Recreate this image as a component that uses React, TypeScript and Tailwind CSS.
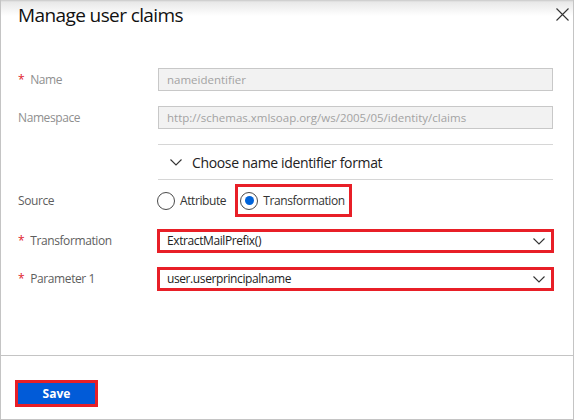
import React, { useState } from 'react';

const font = { fontFamily: '"Open Sans", "Noto Sans", Arial, sans-serif' };

const Chevron: React.FC<{ className?: string }> = ({ className }) => (
  <svg className={className} width="12" height="7" viewBox="0 0 12 7" fill="none">
    <path d="M0.5 0.5L6 6L11.5 0.5" stroke="#333" strokeWidth="1.1" />
  </svg>
);

const Label: React.FC<{ text: string; required?: boolean; dim?: boolean }> = ({ text, required, dim }) => (
  <div className={`w-[140px] shrink-0 text-[12px] tracking-[-0.4px] ${dim ? 'text-[#8f8f8f]' : 'text-[#5e5e5e]'}`}>
    {required ? <span className="mr-[6px] text-[#e0202a]">*</span> : null}
    {text}
  </div>
);

const ReadOnlyField: React.FC<{ value: string }> = ({ value }) => (
  <div className="flex h-[23px] w-[395px] items-center border border-[#c8c8c8] bg-[#f2f2f2] px-[8px] text-[11.5px] text-[#a3a3a3]">
    {value}
  </div>
);

const Radio: React.FC<{ checked?: boolean; label: string; onClick: () => void }> = ({ checked, label, onClick }) => (
  <button
    type="button"
    onClick={onClick}
    className="flex items-center gap-[5px] text-[12px] tracking-[-0.4px] text-[#333]"
  >
    <span className="flex h-[18px] w-[18px] items-center justify-center rounded-full border border-[#4a4a4a] bg-white">
      {checked ? <span className="h-[9px] w-[9px] rounded-full bg-[#0063d9]" /> : null}
    </span>
    {label}
  </button>
);

const Select: React.FC<{ value: string }> = ({ value }) => (
  <div className="-ml-px flex h-[24px] w-[397px] items-center justify-between border-[3px] border-[#e81f27] bg-white pl-[7px] pr-[6px] text-[12px] tracking-[-0.4px] text-[#222]">
    <span>{value}</span>
    <Chevron />
  </div>
);

export default function App() {
  const [source, setSource] = useState<'attribute' | 'transformation'>('transformation');

  return (
    <div className="h-[420px] w-[574px] bg-white" style={font}>
      <div className="flex h-full w-[574px] flex-col border-x border-b border-[#c4c4c4]">
        {/* blade header */}
        <div className="flex h-[40px] items-start justify-between bg-[linear-gradient(to_bottom,#c8c8c8_0px,#e8e8e8_2px,#ffffff_16px)] pl-[17px] pr-[3px]">
          <h1 className="mt-px text-[19px] leading-[28px] tracking-[-0.6px] text-[#111]">Manage user claims</h1>
          <button type="button" className="mt-[7px] p-[1px]" aria-label="Close">
            <svg width="13" height="13" viewBox="0 0 13 13">
              <path d="M0.5 0.5L12.5 12.5M12.5 0.5L0.5 12.5" stroke="#333" strokeWidth="1.1" />
            </svg>
          </button>
        </div>

        {/* form */}
        <div className="flex flex-1 flex-col pl-[17px] pt-[28px]">
          <div className="flex h-[23px] items-center">
            <Label text="Name" required dim />
            <ReadOnlyField value="nameidentifier" />
          </div>
          <div className="mt-[15px] flex h-[23px] items-center">
            <Label text="Namespace" dim />
            <ReadOnlyField value="http://schemas.xmlsoap.org/ws/2005/05/identity/claims" />
          </div>

          <div className="ml-[140px] mt-[15px] flex h-[36px] w-[395px] items-center border-y border-[#d6d6d6] pl-[12px] text-[14px] tracking-[-0.35px] text-[#222]">
            <Chevron className="mr-[10px]" />
            Choose name identifier format
          </div>

          <div className="mt-[4px] flex h-[33px] items-center">
            <Label text="Source" />
            <div className="-ml-px flex items-center gap-[9px]">
              <Radio label="Attribute" checked={source === 'attribute'} onClick={() => setSource('attribute')} />
              <div className="flex h-[33px] items-center border-[3px] border-[#e81f27] pl-[2px] pr-[4px]">
                <Radio
                  label="Transformation"
                  checked={source === 'transformation'}
                  onClick={() => setSource('transformation')}
                />
              </div>
            </div>
          </div>

          <div className="mt-[12px] flex items-center">
            <Label text="Transformation" required />
            <Select value="ExtractMailPrefix()" />
          </div>
          <div className="mt-[14px] flex items-center">
            <Label text="Parameter 1" required />
            <Select value="user.userprincipalname" />
          </div>
        </div>

        {/* footer */}
        <div className="h-[64px] border-t border-[#c4c4c4] pl-[14px] pt-[24px]">
          <div className="inline-flex border-[3px] border-[#e81f27]">
            <button
              type="button"
              className="h-[21px] w-[77px] bg-[#015bd8] text-[12px] font-bold leading-[21px] text-white"
            >
              Save
            </button>
          </div>
        </div>
      </div>
    </div>
  );
}
